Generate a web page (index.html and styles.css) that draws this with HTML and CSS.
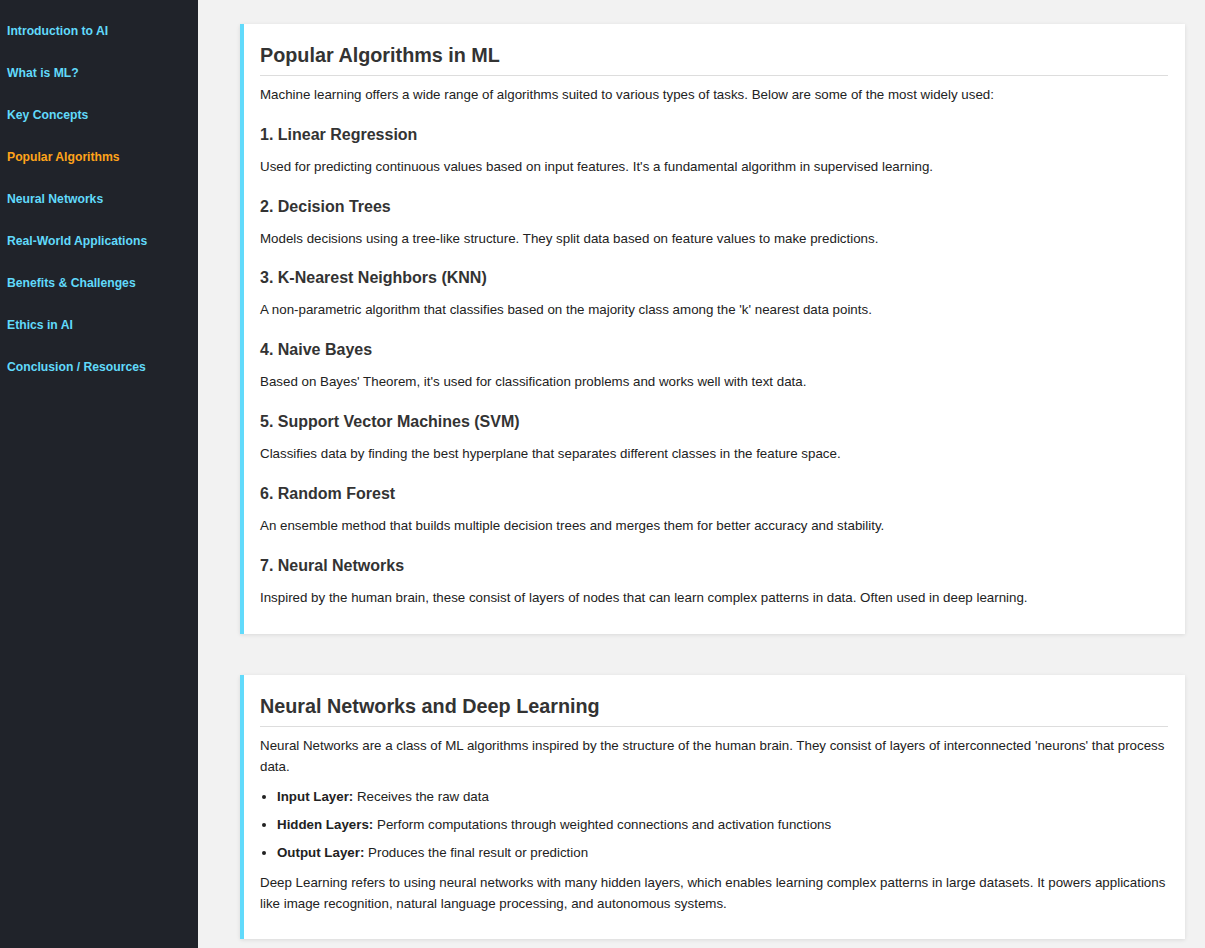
FILE: index.html
```html
<!DOCTYPE html>
<html lang="en">
<head>
<meta charset="utf-8">
<title>Machine Learning</title>
<link rel="stylesheet" href="styles.css">
</head>
<body>
<div class="layout">
  <nav class="sidebar">
    <a class="nav-link" href="#">Introduction to AI</a>
    <a class="nav-link" href="#">What is ML?</a>
    <a class="nav-link" href="#">Key Concepts</a>
    <a class="nav-link active" href="#">Popular Algorithms</a>
    <a class="nav-link" href="#">Neural Networks</a>
    <a class="nav-link" href="#">Real-World Applications</a>
    <a class="nav-link" href="#">Benefits &amp; Challenges</a>
    <a class="nav-link" href="#">Ethics in AI</a>
    <a class="nav-link" href="#">Conclusion / Resources</a>
  </nav>
  <main class="main">
    <section class="card">
      <h2 class="card-title">Popular Algorithms in ML</h2>
      <p class="text">Machine learning offers a wide range of algorithms suited to various types of tasks. Below are some of the most widely used:</p>
      <h3 class="algo-title">1. Linear Regression</h3>
      <p class="text">Used for predicting continuous values based on input features. It's a fundamental algorithm in supervised learning.</p>
      <h3 class="algo-title">2. Decision Trees</h3>
      <p class="text">Models decisions using a tree-like structure. They split data based on feature values to make predictions.</p>
      <h3 class="algo-title">3. K-Nearest Neighbors (KNN)</h3>
      <p class="text">A non-parametric algorithm that classifies based on the majority class among the 'k' nearest data points.</p>
      <h3 class="algo-title">4. Naive Bayes</h3>
      <p class="text">Based on Bayes' Theorem, it's used for classification problems and works well with text data.</p>
      <h3 class="algo-title">5. Support Vector Machines (SVM)</h3>
      <p class="text">Classifies data by finding the best hyperplane that separates different classes in the feature space.</p>
      <h3 class="algo-title">6. Random Forest</h3>
      <p class="text">An ensemble method that builds multiple decision trees and merges them for better accuracy and stability.</p>
      <h3 class="algo-title">7. Neural Networks</h3>
      <p class="text">Inspired by the human brain, these consist of layers of nodes that can learn complex patterns in data. Often used in deep learning.</p>
    </section>
    <section class="card card-second">
      <h2 class="card-title">Neural Networks and Deep Learning</h2>
      <p class="text">Neural Networks are a class of ML algorithms inspired by the structure of the human brain. They consist of layers of interconnected 'neurons' that process data.</p>
      <ul class="layer-list">
        <li><strong>Input Layer:</strong> Receives the raw data</li>
        <li><strong>Hidden Layers:</strong> Perform computations through weighted connections and activation functions</li>
        <li><strong>Output Layer:</strong> Produces the final result or prediction</li>
      </ul>
      <p class="text">Deep Learning refers to using neural networks with many hidden layers, which enables learning complex patterns in large datasets. It powers applications like image recognition, natural language processing, and autonomous systems.</p>
    </section>
  </main>
</div>
</body>
</html>
```
FILE: styles.css
```css
* { box-sizing: border-box; }
html, body { margin: 0; padding: 0; }
body {
  font-family: "Liberation Sans", Arial, sans-serif;
  font-size: 13.33px;
  line-height: 20.8px;
  color: #222;
  background: #f2f2f2;
  height: 948px;
  overflow: hidden;
}
.layout {
  display: flex;
  height: 948px;
}
.sidebar {
  width: 198px;
  flex: 0 0 198px;
  background: #20232a;
  padding-top: 10px;
  display: flex;
  flex-direction: column;
}
.nav-link {
  display: block;
  padding: 0 7px;
  line-height: 42px;
  height: 42px;
  font-weight: bold;
  font-size: 12.2px;
  color: #61dafb;
  text-decoration: none;
}
.nav-link.active { color: #ffa31a; }
.main {
  flex: 1;
  padding: 24px 20px 0 42px;
  overflow: hidden;
}
.card {
  background: #fff;
  border-left: 4px solid #61dafb;
  box-shadow: 0 1px 4px rgba(0,0,0,0.1);
  padding: 20px 17px 18px 16px;
  margin-bottom: 41px;
}
.card-second { padding-bottom: 17px; }
.card-title {
  font-size: 19.8px;
  line-height: 23px;
  font-weight: bold;
  color: #333;
  margin: 0 0 8px;
  padding-bottom: 8px;
  border-bottom: 1px solid #ddd;
}
.text {
  margin: 8px 0;
  padding-top: 1px;
  line-height: 20.8px;
}
.algo-title {
  font-size: 16px;
  line-height: 19px;
  font-weight: bold;
  color: #333;
  margin: 19px 0 12px;
}
.layer-list {
  margin: 9px 0 8px;
  padding-left: 17px;
}
.layer-list li { margin-bottom: 7.2px; }
.layer-list li:last-child { margin-bottom: 0; }
.layer-list strong { color: #222; }
```
